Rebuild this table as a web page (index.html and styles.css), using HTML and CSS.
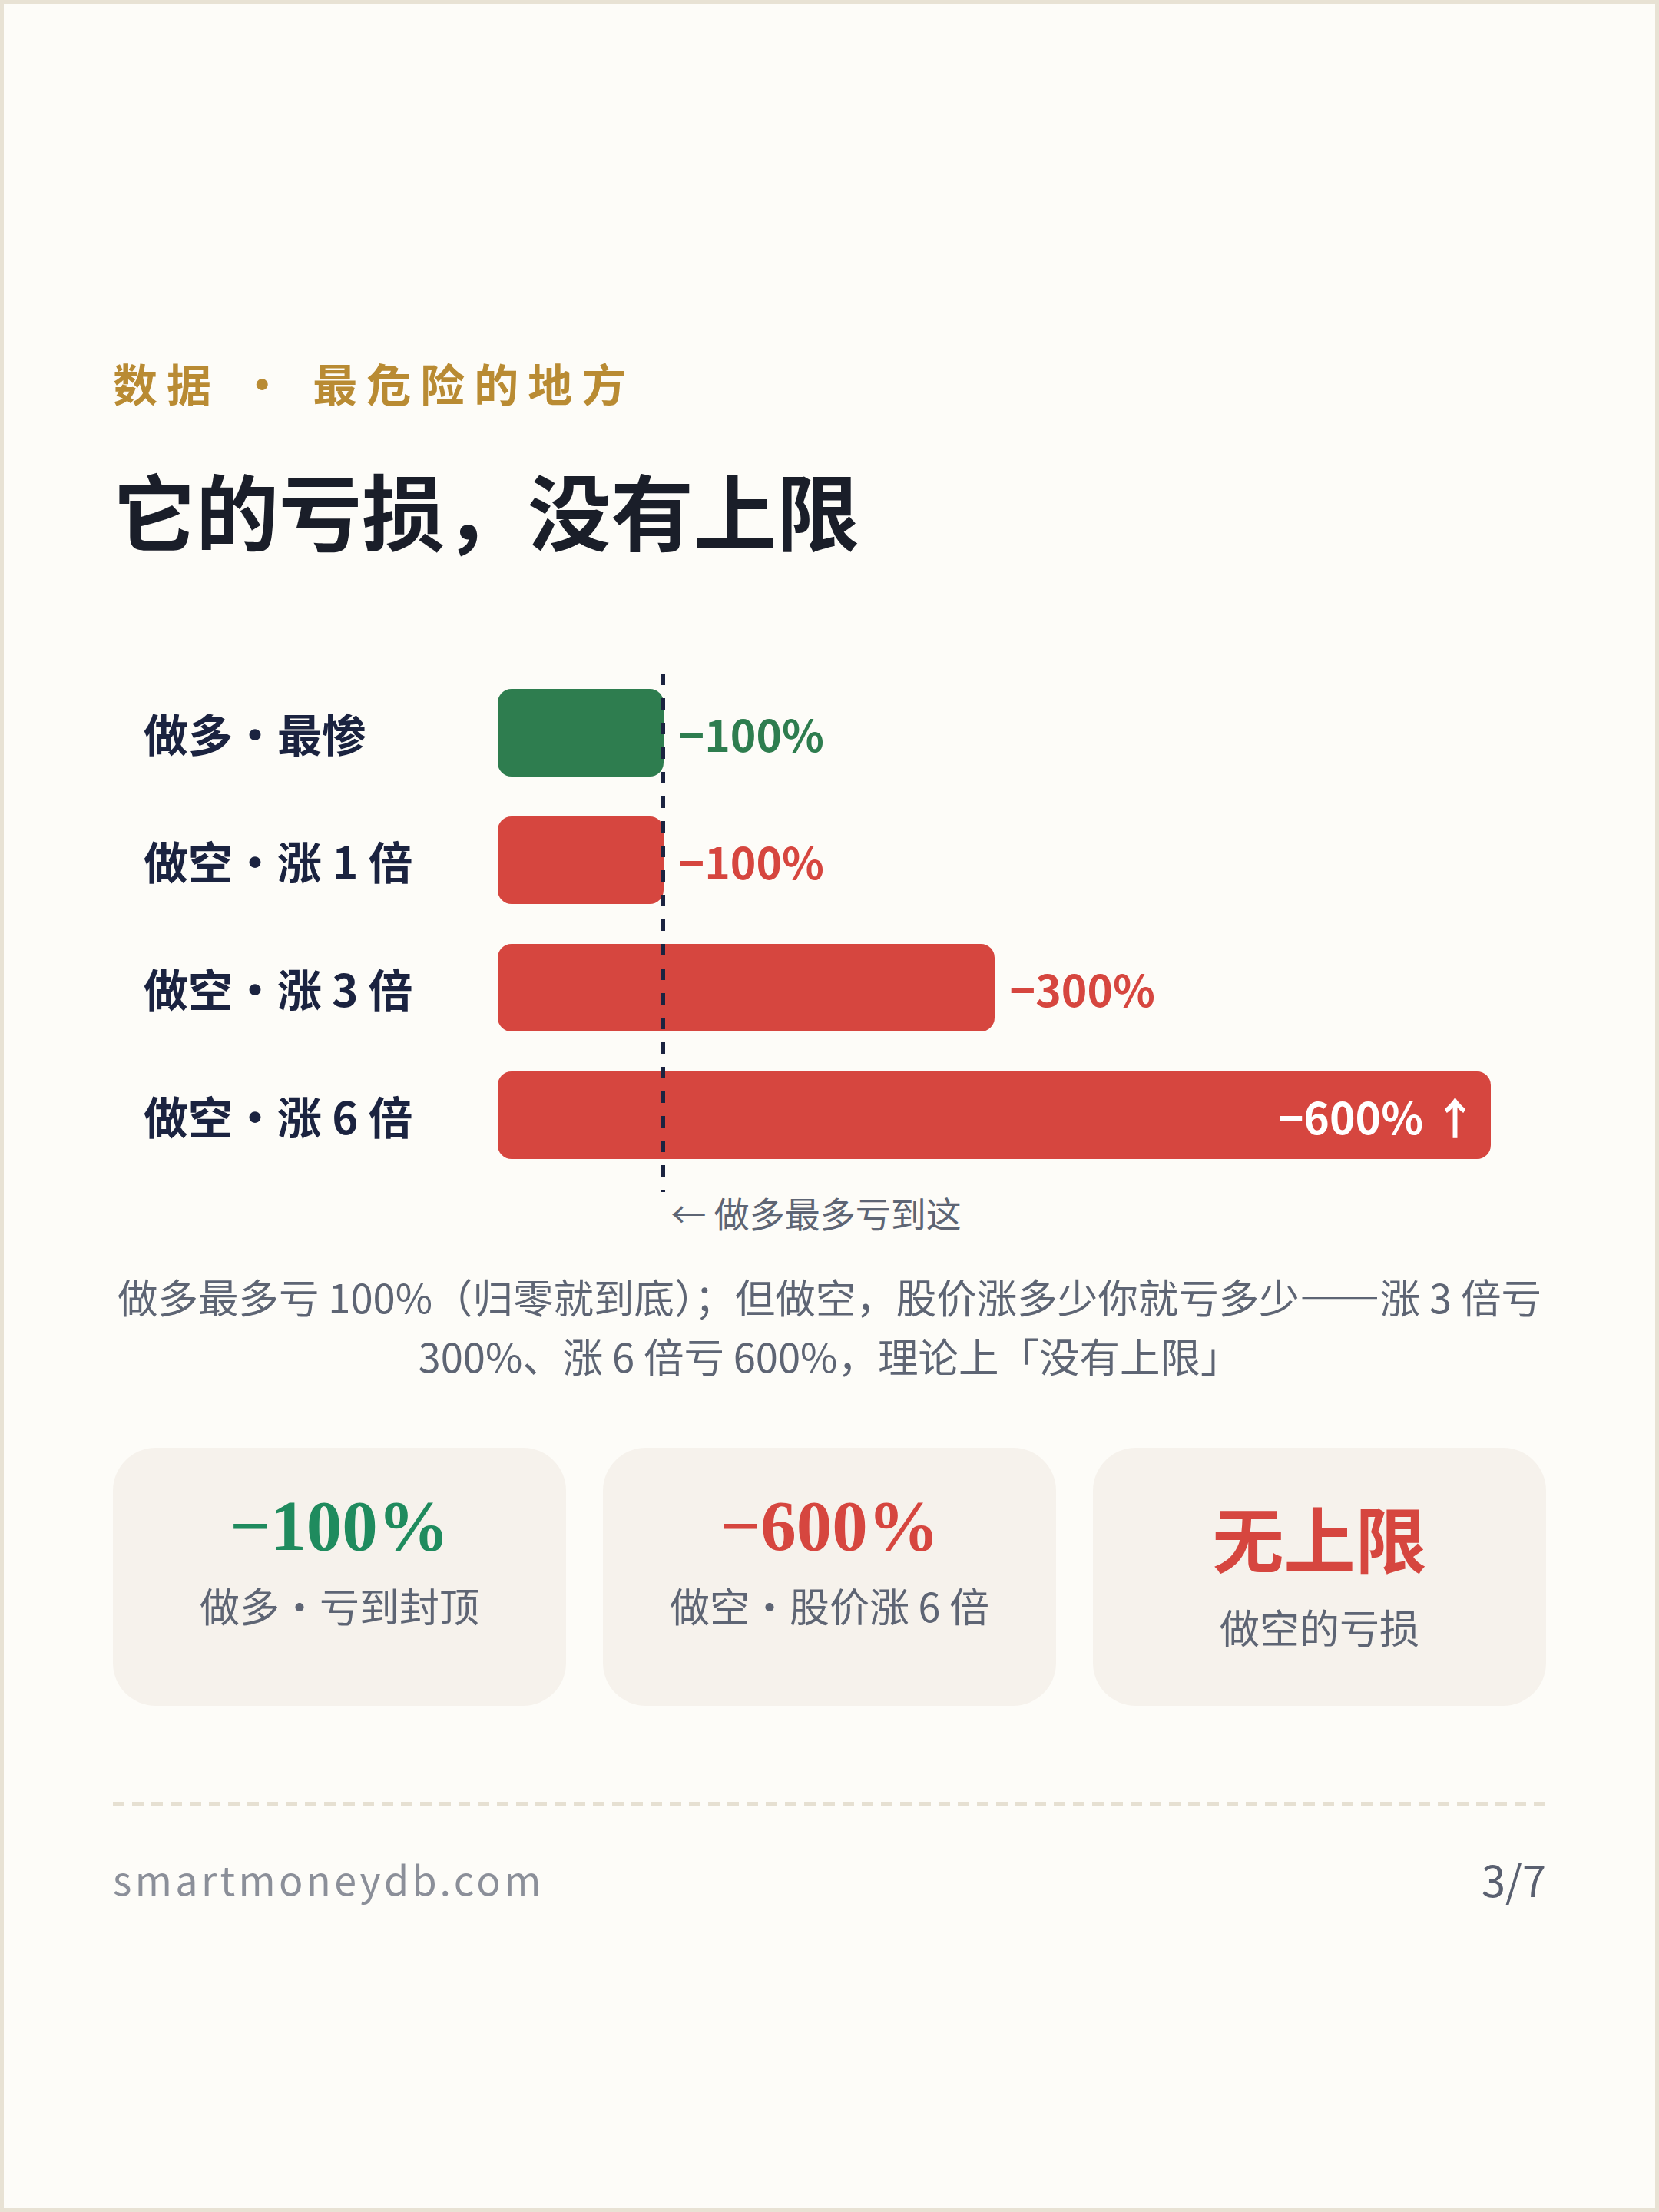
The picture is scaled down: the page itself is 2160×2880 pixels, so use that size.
FILE: index.html
```html
<!DOCTYPE html>
<html lang="zh-CN">
<head>
<meta charset="utf-8">
<title>它的亏损，没有上限</title>
<link rel="stylesheet" href="styles.css">
</head>
<body>
<div class="page">
  <div class="eyebrow">数据 · 最危险的地方</div>
  <h1 class="title">它的亏损，没有上限</h1>

  <div class="chart">
    <div class="ref-line"></div>
    <div class="row">
      <div class="label">做多·最惨</div>
      <div class="track">
        <div class="bar bar-green" style="width:16.667%"></div>
        <span class="val val-green">−100%</span>
      </div>
    </div>
    <div class="row">
      <div class="label">做空·涨 1 倍</div>
      <div class="track">
        <div class="bar bar-red" style="width:16.667%"></div>
        <span class="val val-red">−100%</span>
      </div>
    </div>
    <div class="row">
      <div class="label">做空·涨 3 倍</div>
      <div class="track">
        <div class="bar bar-red" style="width:50%"></div>
        <span class="val val-red">−300%</span>
      </div>
    </div>
    <div class="row">
      <div class="label">做空·涨 6 倍</div>
      <div class="track">
        <div class="bar bar-red bar-inside" style="width:100%"><span class="val val-white">−600% ↑</span></div>
      </div>
    </div>
  </div>
  <div class="note">← 做多最多亏到这</div>

  <p class="desc">做多最多亏 100%（归零就到底）；但做空，股价涨多少你就亏多少——涨 3 倍亏 300%、涨 6 倍亏 600%，理论上「没有上限」</p>

  <div class="cards">
    <div class="card">
      <div class="card-value cv-green">−100%</div>
      <div class="card-label">做多·亏到封顶</div>
    </div>
    <div class="card">
      <div class="card-value cv-red">−600%</div>
      <div class="card-label">做空·股价涨 6 倍</div>
    </div>
    <div class="card">
      <div class="card-value cv-red">无上限</div>
      <div class="card-label">做空的亏损</div>
    </div>
  </div>

  <div class="sep"></div>

  <div class="footer">
    <span class="url">smartmoneydb.com</span>
    <span class="pager">3/7</span>
  </div>
</div>
</body>
</html>
```

FILE: styles.css
```css
html, body {
  margin: 0;
  padding: 0;
  background: #fdfcf8;
}

.page {
  box-sizing: border-box;
  width: 2160px;
  height: 2880px;
  border: 5px solid #e8e2d4;
  background: #fdfcf8;
  padding: 458px 142px 0;
  font-family: "Noto Sans CJK SC", "Noto Sans", sans-serif;
  color: #1a1e29;
}

.eyebrow {
  font-size: 58px;
  line-height: 70px;
  font-weight: 700;
  letter-spacing: 12px;
  color: #b98b33;
}

.title {
  margin: 64px 0 0;
  font-size: 108px;
  line-height: 130px;
  font-weight: 700;
  color: #1a1e29;
}

/* chart */
.chart {
  position: relative;
  margin-top: 150px;
  padding: 20px 0 43px;
  display: flex;
  flex-direction: column;
  gap: 52px;
}

.ref-line {
  position: absolute;
  top: 0;
  bottom: 0;
  left: calc(501px + 1293px / 6 - 3px);
  width: 5px;
  background: repeating-linear-gradient(to bottom, #1b2340 0 15px, transparent 15px 32px);
  z-index: 2;
}

.row {
  display: grid;
  grid-template-columns: 501px 1293px;
  align-items: center;
  height: 114px;
}

.label {
  padding-left: 40px;
  font-size: 58px;
  font-weight: 700;
  color: #1b2340;
  white-space: nowrap;
}

.track {
  display: flex;
  align-items: center;
  height: 114px;
}

.bar {
  box-sizing: border-box;
  height: 114px;
  border-radius: 18px;
  flex: none;
}

.bar-green { background: #2e7d4f; }
.bar-red { background: #d6463f; }

.bar-inside {
  display: flex;
  align-items: center;
  justify-content: flex-end;
  padding-right: 18px;
}

.val {
  margin-left: 20px;
  font-size: 57px;
  font-weight: 700;
  white-space: nowrap;
}

.val-green { color: #2e7d4f; }
.val-red { color: #d6463f; }
.val-white { color: #ffffff; margin-left: 0; }

.note {
  margin-left: calc(501px + 1293px / 6 + 10px);
  font-size: 46px;
  line-height: 53px;
  color: #5e6574;
}

.desc {
  margin: 44px 0 0;
  font-size: 52.5px;
  line-height: 77px;
  color: #5e6574;
  text-align: center;
}

/* cards */
.cards {
  margin-top: 82px;
  display: grid;
  grid-template-columns: repeat(3, 1fr);
  gap: 48px;
}

.card {
  box-sizing: border-box;
  height: 336px;
  padding: 48px 20px 0;
  border-radius: 56px;
  background: #f6f2ec;
  display: flex;
  flex-direction: column;
  align-items: center;
  gap: 12px;
  text-align: center;
}

.card-value {
  font-family: "Liberation Serif", "Noto Sans CJK SC", serif;
  font-size: 93px;
  font-weight: 700;
  line-height: normal;
}

.cv-green { color: #1f8b5e; }
.cv-red { color: #d6463f; }

.card-label {
  font-size: 52px;
  line-height: normal;
  color: #5e6574;
}

.sep {
  margin-top: 125px;
  height: 5px;
  background: repeating-linear-gradient(to right, #e6e0d2 0 15px, transparent 15px 25px);
}

.footer {
  margin-top: 60px;
  display: flex;
  justify-content: space-between;
  align-items: center;
  line-height: 70px;
}

.url {
  font-size: 52px;
  letter-spacing: 4.4px;
  color: #8b8f99;
}

.pager {
  font-size: 56px;
  color: #5a6070;
}
```
